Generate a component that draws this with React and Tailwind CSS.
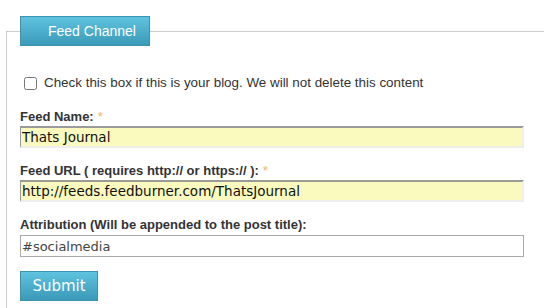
import React from "react";

// Feed channel form, inside a fieldset with a teal legend tab
function Field({ label, required, value, filled }) {
  return (
    <div>
      <label className="block text-[13px] leading-4 font-bold text-[#333]">
        {label}
        {required && <span className="ml-1 text-[#f4b060] font-normal">*</span>}
      </label>
      <input
        type="text"
        defaultValue={value}
        className={
          filled
            ? "mt-[1px] block w-[504px] h-[22px] px-[1px] bg-[#fafabe] border-t-2 border-l border-b-2 border-r-2 border-t-[#9a9a9a] border-l-[#9a9a9a] border-b-[#eeeeee] border-r-[#eeeeee] text-[13.5px] text-[#111] outline-none font-['DejaVu_Sans',sans-serif]"
            : "mt-[2px] block w-[504px] h-[22px] px-[1px] bg-white border border-[#aaaaaa] text-[13px] text-[#444] outline-none font-['DejaVu_Sans',sans-serif]"
        }
      />
    </div>
  );
}

export default function App() {
  return (
    <div className="w-[544px] h-[308px] overflow-hidden bg-white font-['Liberation_Sans',Arial,sans-serif]">
      <fieldset className="mt-4 ml-[6px] w-[600px] border border-[#cccccc] pl-[13px] pb-10 min-w-0">
        <legend className="px-0">
          <span className="block h-[30px] pl-[27px] pr-[13px] leading-[28px] text-[14px] text-white bg-gradient-to-b from-[#5fc3df] to-[#3a9ab7] border border-[#3a94b0]">
            Feed Channel
          </span>
        </legend>

        <div className="mt-[27px] flex items-center h-5">
          <input type="checkbox" className="ml-[4px] w-[13px] h-[13px] m-0" />
          <span className="ml-[7px] text-[13.4px] text-[#333]">
            Check this box if this is your blog. We will not delete this content
          </span>
        </div>

        <div className="mt-[16px] flex flex-col gap-[15px]">
          <Field label="Feed Name:" required value="Thats Journal" filled />
          <Field
            label="Feed URL ( requires http:// or https:// ):"
            required
            value="http://feeds.feedburner.com/ThatsJournal"
            filled
          />
          <Field label="Attribution (Will be appended to the post title):" value="#socialmedia" />
        </div>

        <button className="mt-[14px] w-[78px] h-[30px] text-[15px] text-white bg-gradient-to-b from-[#5fc3df] to-[#3a9ab7] border border-[#3a94b0] font-['DejaVu_Sans',sans-serif]">
          Submit
        </button>
      </fieldset>
    </div>
  );
}
